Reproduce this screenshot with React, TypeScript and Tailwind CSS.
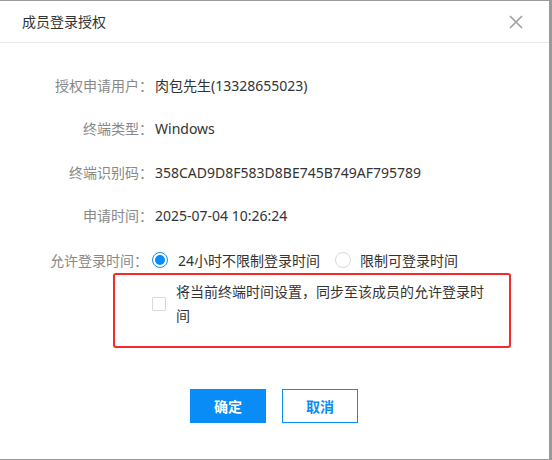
const rows = [
  { label: "授权申请用户：", value: "肉包先生(13328655023)", h: "h-[44px]" },
  { label: "终端类型：", value: "Windows", h: "h-[43px]" },
  { label: "终端识别码：", value: "358CAD9D8F583D8BE745B749AF795789", h: "h-[44px]" },
  { label: "申请时间：", value: "2025-07-04 10:26:24", h: "h-[43px]" },
];

const font = { fontFamily: '"Noto Sans", "Noto Sans CJK SC", sans-serif' };

export default function App() {
  return (
    <div className="w-[552px] h-[460px] bg-[#9a9a9a] pt-px" style={font}>
      <div className="w-[549px] h-[458px] bg-white flex flex-col text-[14px]">
        <div className="h-[42px] border-b border-[#e6e6e6] flex items-center justify-between pl-[22px] pr-[26px]">
          <span className="text-[#333]">成员登录授权</span>
          <svg width="14" height="14" viewBox="0 0 14 14" className="text-[#a0a0a0]">
            <path d="M1 1L13 13M13 1L1 13" stroke="currentColor" strokeWidth="1.7" />
          </svg>
        </div>

        <div className="pt-[20px] flex flex-col">
          {rows.map((r) => (
            <div key={r.label} className={`${r.h} flex items-center`}>
              <span className="w-[153px] text-right text-[#888]">{r.label}</span>
              <span className="ml-[2px] text-[#333]">{r.value}</span>
            </div>
          ))}

          <div className="mt-[11px] h-[24px] flex items-center">
            <span className="w-[152px] text-right text-[#888] pr-[4px]">允许登录时间：</span>
            <span className="w-[16px] h-[16px] rounded-full border border-[#0a8cf7] flex items-center justify-center">
              <span className="w-[10px] h-[10px] rounded-full bg-[#0a8cf7]" />
            </span>
            <span className="ml-[10px] text-[#333]">24小时不限制登录时间</span>
            <span className="ml-[15px] w-[16px] h-[16px] rounded-full border border-[#d9d9d9]" />
            <span className="ml-[9px] text-[#333]">限制可登录时间</span>
          </div>

          <div className="ml-[113px] mt-px w-[398px] h-[75px] border-2 border-[#f52b2b] rounded-[3px] flex items-start pl-[37px] pt-[5px]">
            <div className="flex items-center">
              <span className="w-[14px] h-[14px] border border-[#d9d9d9] rounded-[1px] shrink-0" />
              <span className="ml-[10px] w-[316px] leading-[24px] text-[#333]">
                将当前终端时间设置，同步至该成员的允许登录时间
              </span>
            </div>
          </div>
        </div>

        <div className="mt-[41px] flex justify-center gap-[16px] pr-px">
          <button className="w-[76px] h-[34px] bg-[#0a8cf7] text-white font-bold">确定</button>
          <button className="w-[76px] h-[34px] border border-[#0a8cf7] text-[#0a8cf7] font-bold">取消</button>
        </div>
      </div>
    </div>
  );
}
